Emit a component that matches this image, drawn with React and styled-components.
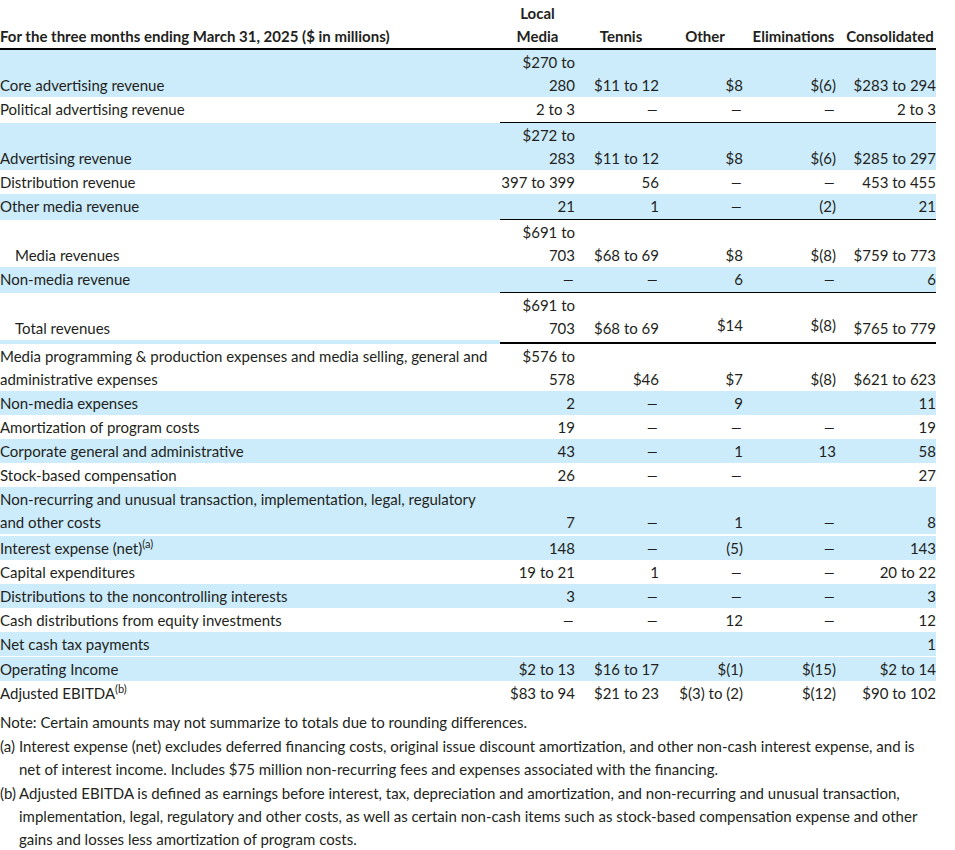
import React from 'react';
import styled, { createGlobalStyle } from 'styled-components';

const BLUE = '#ccecfc';
const INK = '#231f20';

const GlobalStyle = createGlobalStyle`
  html, body { margin: 0; padding: 0; background: #fff; }
  body {
    font-family: Lato, "Liberation Sans", Arial, sans-serif;
    color: ${INK};
    font-size: 15px;
  }
`;

const Page = styled.div`
  width: 936px;
`;

const Table = styled.table`
  width: 936px;
  table-layout: fixed;
  border-collapse: separate;
  border-spacing: 0;
  font-size: 15px;
  line-height: 23px;
`;

const Col = styled.col`
  width: ${(p) => p.$w}px;
`;

const HeadCell = styled.th`
  font-weight: 700;
  vertical-align: bottom;
  text-align: ${(p) => p.$align || 'center'};
  padding: 2px 0 0 ${(p) => p.$padLeft || 0}px;
  border-bottom: 2px solid #000;
  white-space: nowrap;
`;

const Row = styled.tr`
  background: ${(p) => (p.$shade ? BLUE : '#fff')};
`;

const LabelCell = styled.td`
  vertical-align: bottom;
  text-align: left;
  white-space: nowrap;
  padding: 1px 0 ${(p) => (p.$rule ? 1 : 0)}px ${(p) => (p.$indent ? 15 : 0)}px;
  border-top: ${(p) => p.$gap || 0}px solid #fff;
  border-bottom: ${(p) => p.$rule || 0}px solid transparent;
`;

const NumCell = styled.td`
  vertical-align: bottom;
  text-align: right;
  white-space: nowrap;
  padding: 1px 0 ${(p) => (p.$rule ? 1 : 0) + (p.$lift ? 3 : 0)}px 0;
  border-top: ${(p) => p.$gap || 0}px solid #fff;
  border-bottom: ${(p) => p.$rule || 0}px solid #000;
`;

const Dash = styled.span`
  display: inline-block;
  transform: scaleX(1.5);
  transform-origin: right center;
`;

const SpacerLabel = styled.td`
  height: 4px;
  padding: 0;
  font-size: 0;
  line-height: 0;
  background: ${BLUE};
`;

const SpacerNum = styled.td`
  height: 2px;
  padding: 0;
  font-size: 0;
  line-height: 0;
  background: #fff;
  border-bottom: 2px solid #000;
`;

const Sup = styled.sup`
  font-size: 11px;
  line-height: 0;
  vertical-align: 6px;
`;

const Notes = styled.div`
  margin-top: 6px;
  font-size: 15px;
  line-height: 23px;
`;

const Note = styled.p`
  margin: 0 0 1px;
`;

const Foot = styled.div`
  display: grid;
  grid-template-columns: 19px auto;
  margin: 0 0 1px;
`;

const Marker = styled.span`
  white-space: nowrap;
`;

const D = '–';

const rows = [
  { label: 'Core advertising revenue', shade: true, vals: [['$270 to', '280'], '$11 to 12', '$8', '$(6)', '$283 to 294'] },
  { label: 'Political advertising revenue', rule: 1, vals: ['2 to 3', D, D, D, '2 to 3'] },
  { label: 'Advertising revenue', shade: true, vals: [['$272 to', '283'], '$11 to 12', '$8', '$(6)', '$285 to 297'] },
  { label: 'Distribution revenue', vals: ['397 to 399', '56', D, D, '453 to 455'] },
  { label: 'Other media revenue', shade: true, rule: 1, vals: ['21', '1', D, '(2)', '21'] },
  { label: 'Media revenues', indent: true, vals: [['$691 to', '703'], '$68 to 69', '$8', '$(8)', '$759 to 773'] },
  { label: 'Non-media revenue', shade: true, rule: 1, vals: [D, D, '6', D, '6'] },
  { label: 'Total revenues', indent: true, vals: [['$691 to', '703'], '$68 to 69', { v: '$14', lift: true }, { v: '$(8)', lift: true }, '$765 to 779'] },
  { spacer: true },
  { label: ['Media programming & production expenses and media selling, general and', 'administrative expenses'], vals: [['$576 to', '578'], '$46', '$7', '$(8)', '$621 to 623'] },
  { label: 'Non-media expenses', shade: true, vals: ['2', D, '9', '', '11'] },
  { label: 'Amortization of program costs', vals: ['19', D, D, D, '19'] },
  { label: 'Corporate general and administrative', shade: true, vals: ['43', D, '1', '13', '58'] },
  { label: 'Stock-based compensation', vals: ['26', D, D, '', '27'] },
  { label: ['Non-recurring and unusual transaction, implementation, legal, regulatory', 'and other costs'], shade: true, vals: ['7', D, '1', D, '8'] },
  { label: 'Interest expense (net)', sup: '(a)', shade: true, gap: 2, vals: ['148', D, '(5)', D, '143'] },
  { label: 'Capital expenditures', vals: ['19 to 21', '1', D, D, '20 to 22'] },
  { label: 'Distributions to the noncontrolling interests', shade: true, vals: ['3', D, D, D, '3'] },
  { label: 'Cash distributions from equity investments', vals: [D, D, '12', D, '12'] },
  { label: 'Net cash tax payments', shade: true, vals: ['', '', '', '', '1'] },
  { label: 'Operating Income', shade: true, gap: 1, vals: ['$2 to 13', '$16 to 17', '$(1)', '$(15)', '$2 to 14'] },
  { label: 'Adjusted EBITDA', sup: '(b)', vals: ['$83 to 94', '$21 to 23', '$(3) to (2)', '$(12)', '$90 to 102'] },
];

const widths = [500, 75, 84, 84, 93, 100];

function Lines({ value }) {
  if (Array.isArray(value)) {
    return value.map((line, i) => (
      <React.Fragment key={i}>
        {i > 0 && <br />}
        {line}
      </React.Fragment>
    ));
  }
  if (value === D) return <Dash>{D}</Dash>;
  return value;
}

export default function App() {
  return (
    <Page>
      <GlobalStyle />
      <Table>
        <colgroup>
          {widths.map((w, i) => (
            <Col key={i} $w={w} />
          ))}
        </colgroup>
        <thead>
          <tr>
            <HeadCell $align="left">For the three months ending March 31, 2025 ($ in millions)</HeadCell>
            <HeadCell>
              Local
              <br />
              Media
            </HeadCell>
            <HeadCell $padLeft={8}>Tennis</HeadCell>
            <HeadCell $padLeft={8}>Other</HeadCell>
            <HeadCell $padLeft={8}>Eliminations</HeadCell>
            <HeadCell $padLeft={8}>Consolidated</HeadCell>
          </tr>
        </thead>
        <tbody>
          {rows.map((r, i) =>
            r.spacer ? (
              <tr key={i}>
                <SpacerLabel />
                <SpacerNum />
                <SpacerNum />
                <SpacerNum />
                <SpacerNum />
                <SpacerNum />
              </tr>
            ) : (
              <Row key={i} $shade={r.shade}>
                <LabelCell $indent={r.indent} $rule={r.rule} $gap={r.gap}>
                  <Lines value={r.label} />
                  {r.sup && <Sup>{r.sup}</Sup>}
                </LabelCell>
                {r.vals.map((v, j) => {
                  const obj = typeof v === 'object' && !Array.isArray(v) ? v : { v };
                  return (
                    <NumCell key={j} $rule={r.rule} $gap={r.gap} $lift={obj.lift}>
                      <Lines value={obj.v} />
                    </NumCell>
                  );
                })}
              </Row>
            )
          )}
        </tbody>
      </Table>
      <Notes>
        <Note>Note: Certain amounts may not summarize to totals due to rounding differences.</Note>
        <Foot>
          <Marker>(a)</Marker>
          <span>
            Interest expense (net) excludes deferred financing costs, original issue discount amortization, and other non-cash interest expense, and is
            <br />
            net of interest income. Includes $75 million non-recurring fees and expenses associated with the financing.
          </span>
        </Foot>
        <Foot>
          <Marker>(b)</Marker>
          <span>
            Adjusted EBITDA is defined as earnings before interest, tax, depreciation and amortization, and non-recurring and unusual transaction,
            <br />
            implementation, legal, regulatory and other costs, as well as certain non-cash items such as stock-based compensation expense and other
            <br />
            gains and losses less amortization of program costs.
          </span>
        </Foot>
      </Notes>
    </Page>
  );
}
